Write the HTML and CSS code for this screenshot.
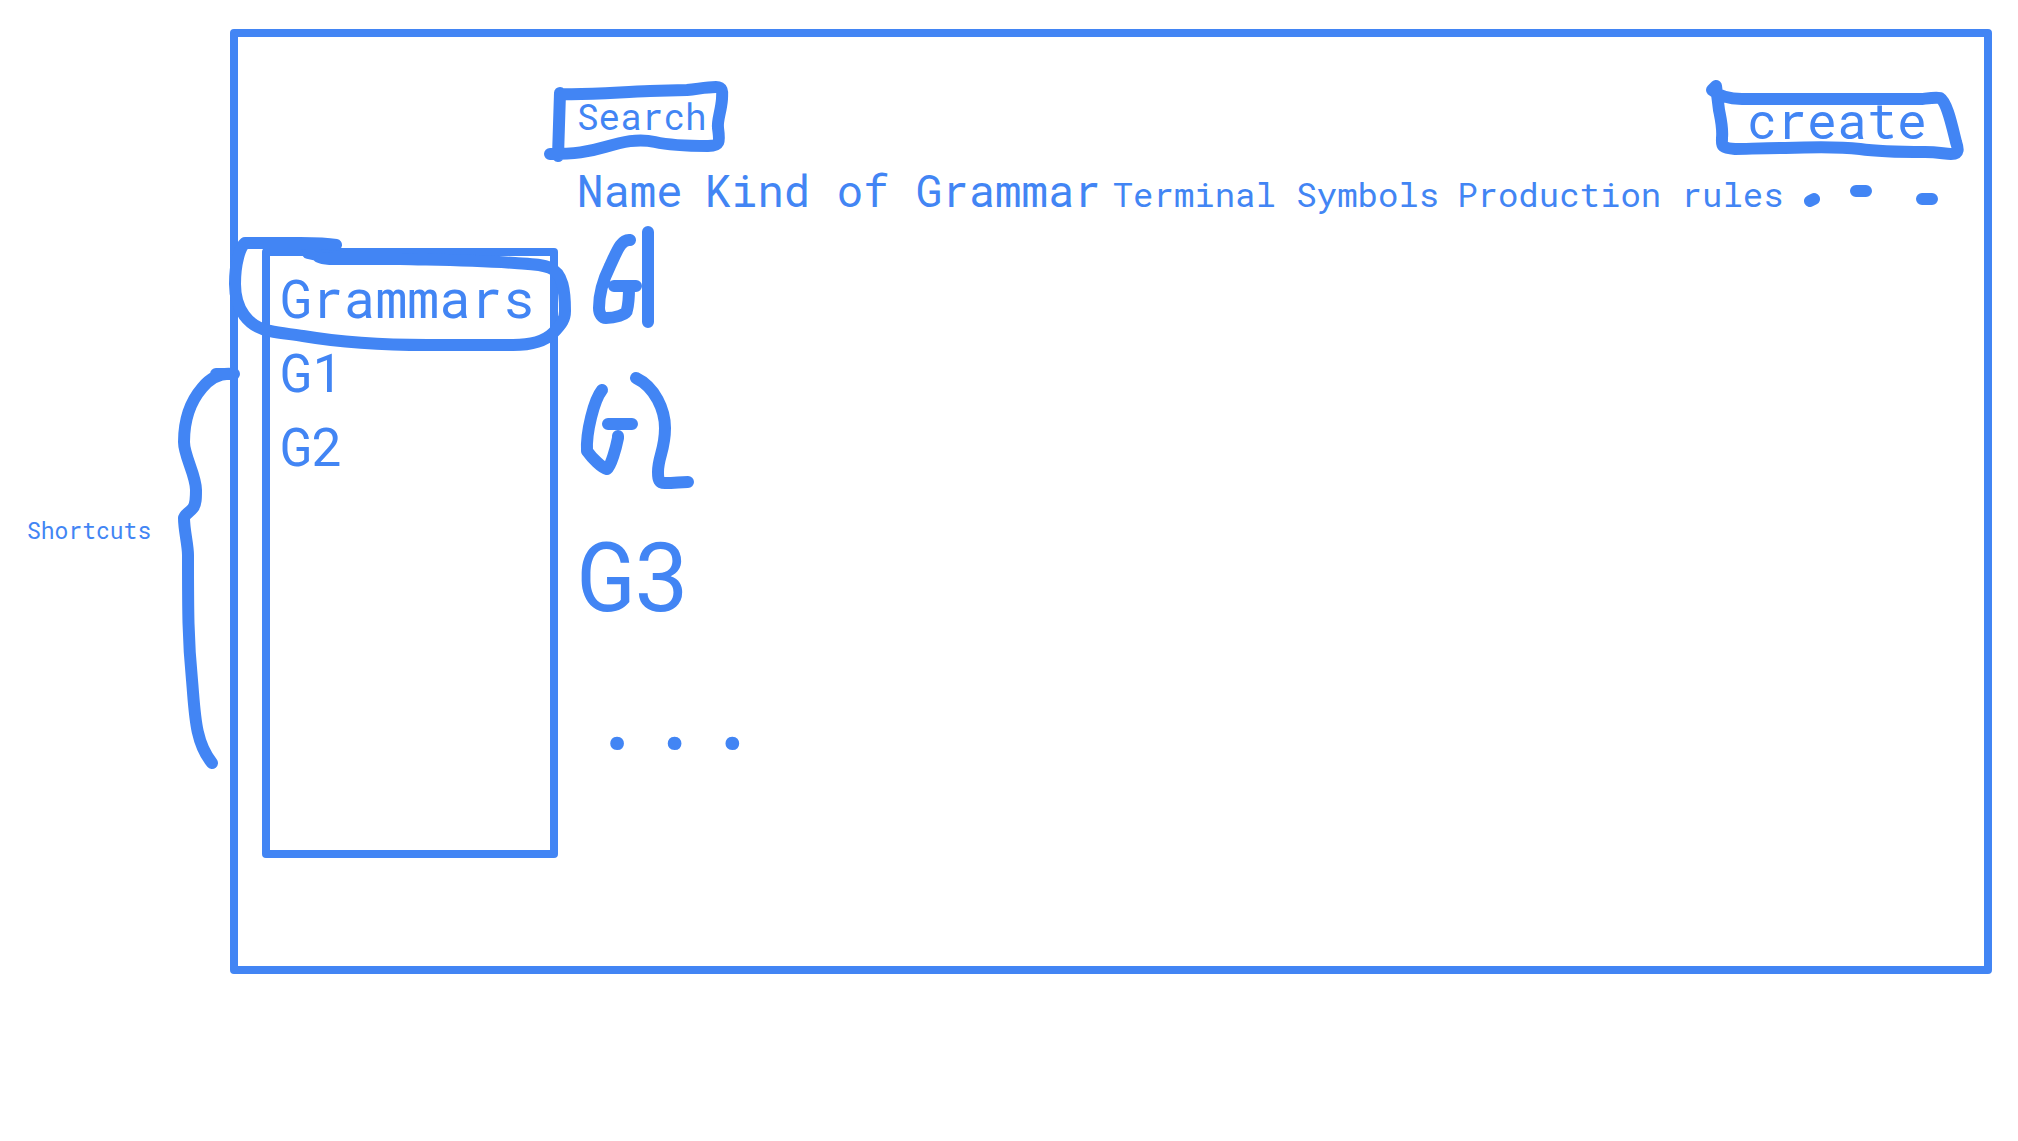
FILE: index.html
```html
<!DOCTYPE html>
<html lang="en">
<head>
<meta charset="utf-8">
<meta name="viewport" content="width=device-width, initial-scale=1">
<title>Grammars</title>
<link rel="stylesheet" href="styles.css">
</head>
<body>
<div class="page">
  <aside class="note">
    <p class="note-label">Shortcuts</p>
    <svg class="stroke brace" viewBox="170 360 80 420" aria-hidden="true">
      <path d="M234 374H216M232 374C222 373 212 376 202 388C190 402 184 420 184 442C184 456 196 475 196 490C196 498 196 504 193 508C190 512 184 515 184 518C184 530 188 545 188 555C188 610 188 640 192 680C195 715 195 742 212 763"/>
    </svg>
  </aside>
  <div class="frame">
    <nav class="sidebar" aria-label="Shortcuts">
      <a class="side-link" href="#grammars">Grammars
        <svg class="stroke lasso" viewBox="220 230 360 130" aria-hidden="true">
          <path d="M336 244C325 242 310 242 300 242H245C240 246 235 262 235 283C235 308 248 326 270 330C280 332 290 333 303 335C345 342 380 344 427 344H513C532 344 546 339 553 332C562 323 565 318 565 310C565 290 563 272 550 267C542 263 530 263 515 262C470 259 440 259 400 258H334C325 258 318 257 317 254L308 252"/>
        </svg>
      </a>
      <a class="side-link" href="#g1">G1</a>
      <a class="side-link" href="#g2">G2</a>
    </nav>
    <main class="main">
      <div class="toolbar">
        <div class="search">
          <input class="search-input" type="text" placeholder="Search" aria-label="Search">
          <svg class="stroke search-outline" viewBox="540 78 200 90" aria-hidden="true">
            <path d="M560 93L558 156M562 94C590 95 620 92 650 91L687 90C698 89 706 87 716 87C724 87 722 94 722 99C721 112 717 120 718 128C720 142 720 146 708 146C685 146 668 145 655 142C638 138 622 142 605 147C588 152 575 154 550 154"/>
          </svg>
        </div>
        <button class="create" type="button">create
          <svg class="stroke create-outline" viewBox="1697 74 280 90" aria-hidden="true">
            <path d="M1716 86L1712 90C1720 97 1730 99 1742 99H1922C1930 98 1936 97 1940 98C1947 102 1952 126 1956 142C1958 148 1960 154 1951 154C1945 154 1938 152 1925 152C1905 152 1880 152 1860 149C1835 146 1810 147 1785 148C1765 148 1745 149 1735 149C1720 148 1722 145 1722 138C1723 128 1721 120 1719 110L1716 86"/>
          </svg>
        </button>
      </div>
      <table class="grid">
        <thead>
          <tr>
            <th class="large name" scope="col">Name</th>
            <th class="large kind" scope="col">Kind of Grammar</th>
            <th scope="col">Terminal Symbols</th>
            <th scope="col">Production rules</th>
            <th scope="col" aria-label="More columns">
              <svg class="stroke more-columns" viewBox="1802 177 140 30" aria-hidden="true">
                <path d="M1810 201L1814 199M1856 191H1866M1922 199H1932"/>
              </svg>
            </th>
          </tr>
        </thead>
        <tbody>
          <tr>
            <td colspan="5">
              <svg class="stroke sketch-one" viewBox="577 225 120 110" role="img" aria-label="G1">
                <path d="M630 240C621 239 617 251 610 266C603 280 599 294 599 308C599 314 602 318 606 318C614 318 627 315 627 310C629 302 629 296 629 288M614 286H636M648 232V322"/>
              </svg>
            </td>
          </tr>
          <tr>
            <td colspan="5">
              <svg class="stroke sketch-two" viewBox="577 335 120 170" role="img" aria-label="G2">
                <path d="M602 390C594 400 586 432 587 451C592 458 602 468 607 469C611 466 616 448 618 438L618 436M608 424H632M636 378C655 387 665 410 665 428C665 450 658 457 658 472C658 480 659 483 665 483C675 483 680 482 688 482"/>
              </svg>
            </td>
          </tr>
          <tr><td class="entry" colspan="5">G3</td></tr>
          <tr><td class="entry more-rows" colspan="5">...</td></tr>
        </tbody>
      </table>
    </main>
  </div>
</div>
</body>
</html>
```
FILE: styles.css
```css
* {
  box-sizing: border-box;
}

body {
  margin: 0;
  background: #fff;
  color: #4285f4;
  font-family: "Roboto Mono", "Liberation Mono", monospace;
}

.page {
  display: grid;
  grid-template-columns: 230px 1fr;
  padding: 29px 26px 29px 0;
}

.stroke {
  fill: none;
  stroke: #4285f4;
  stroke-width: 12px;
  stroke-linecap: round;
  stroke-linejoin: round;
  pointer-events: none;
}

/* Margin note beside the frame */
.note {
  position: relative;
  padding: 486px 0 0 27px;
}

.note-label {
  margin: 0;
  font-size: 23px;
  line-height: 30px;
}

.brace {
  position: absolute;
  z-index: 1;
  top: 331px;
  left: 170px;
  width: 80px;
  height: 420px;
}

/* Application frame */
.frame {
  display: grid;
  grid-template-columns: 296px 1fr;
  padding: 0 0 108px 24px;
  border: 8px solid #4285f4;
  border-radius: 4px;
}

.sidebar {
  display: flex;
  flex-direction: column;
  min-height: 610px;
  margin-top: 211px;
  padding: 4px 10px;
  border: 8px solid #4285f4;
  border-radius: 4px;
}

.side-link {
  position: relative;
  color: inherit;
  font-size: 53px;
  line-height: 74px;
  text-decoration: none;
}

.lasso {
  position: absolute;
  top: -29px;
  left: -60px;
  width: 360px;
  height: 130px;
}

.main {
  padding: 51px 0 0 19px;
}

.toolbar {
  display: flex;
  align-items: center;
  justify-content: space-between;
  height: 60px;
  padding-right: 27px;
}

.search,
.create {
  position: relative;
}

.search-input {
  display: block;
  width: 136px;
  height: 48px;
  padding: 0 0 4px;
  border: 0;
  outline: 0;
  background: transparent;
  color: inherit;
  font: inherit;
  font-size: 36px;
}

.search-input::placeholder {
  color: #4285f4;
  opacity: 1;
}

.search-outline {
  position: absolute;
  top: -16px;
  left: -37px;
  width: 200px;
  height: 90px;
}

.create {
  height: 60px;
  padding: 4px 30px 0;
  border: 0;
  background: transparent;
  color: inherit;
  font: inherit;
  font-size: 50px;
  line-height: 56px;
}

.create-outline {
  position: absolute;
  top: -14px;
  left: -20px;
  width: 280px;
  height: 90px;
}

/* Grammar table */
.grid {
  margin-top: 17px;
  border-collapse: collapse;
  white-space: nowrap;
}

.grid th {
  padding: 0 18px 6px 0;
  font-size: 34px;
  font-weight: 400;
  line-height: 50px;
  text-align: left;
  vertical-align: baseline;
}

.grid th.large {
  font-size: 44px;
}

.grid th.name {
  padding-right: 22px;
}

.grid th.kind {
  padding-right: 12px;
}

.grid td {
  padding: 0;
}

.more-columns {
  width: 140px;
  height: 30px;
}

.sketch-one,
.sketch-two {
  display: block;
  width: 120px;
}

.sketch-one {
  height: 110px;
}

.sketch-two {
  height: 170px;
}

.grid .entry {
  font-size: 96px;
  line-height: 138px;
}

.grid .more-rows {
  padding-left: 10px;
}
```
